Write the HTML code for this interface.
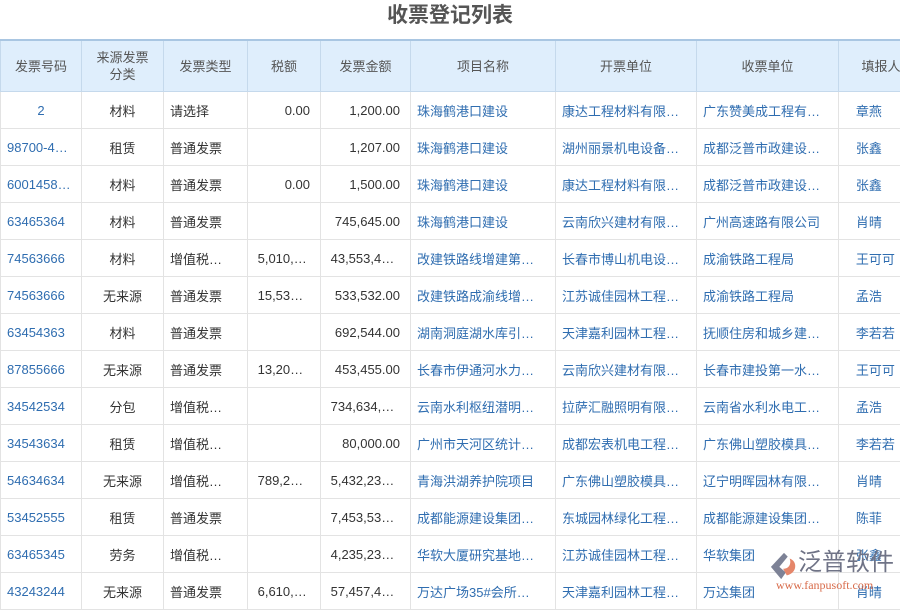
<!DOCTYPE html><html><head><meta charset="utf-8"><style>
body{margin:0;width:900px;height:600px;overflow:hidden;background:#fff;font-family:"Liberation Sans","Noto Sans CJK SC",sans-serif;}
h1{margin:0;position:absolute;top:1px;left:0;width:900px;text-align:center;font-size:21px;line-height:30px;color:#555;font-weight:bold;}
table{position:absolute;top:39px;left:0;border-collapse:collapse;table-layout:fixed;width:923px;font-size:13px;}
th{background:#dfeefc;color:#555;font-weight:normal;height:50px;padding:0;border:1px solid #c5d9ec;border-top:2px solid #a9c6e2;line-height:17px;}
td{height:36px;padding:0 6px;border:1px solid #e3e3e3;white-space:nowrap;overflow:hidden;color:#333;}
td.c{text-align:center}td.r{text-align:right;padding-right:10px}
.b{color:#2f6db0}
.logo{position:absolute;left:770px;top:548px;}
</style></head><body>
<h1>收票登记列表</h1>
<table>
<colgroup><col style="width:81px"><col style="width:82px"><col style="width:84px"><col style="width:73px"><col style="width:90px"><col style="width:145px"><col style="width:141px"><col style="width:142px"><col style="width:85px"></colgroup>
<tr><th>发票号码</th><th>来源发票<br>分类</th><th>发票类型</th><th>税额</th><th>发票金额</th><th>项目名称</th><th>开票单位</th><th>收票单位</th><th>填报人</th></tr>
<tr><td class="c b">2</td><td class="c">材料</td><td>请选择</td><td class="r">0.00</td><td class="r">1,200.00</td><td class="b">珠海鹤港口建设</td><td class="b">康达工程材料有限…</td><td class="b">广东赞美成工程有…</td><td class="b">&nbsp;&nbsp;&nbsp;章燕</td></tr>
<tr><td class="b">98700-4…</td><td class="c">租赁</td><td>普通发票</td><td class="r"></td><td class="r">1,207.00</td><td class="b">珠海鹤港口建设</td><td class="b">湖州丽景机电设备…</td><td class="b">成都泛普市政建设…</td><td class="b">&nbsp;&nbsp;&nbsp;张鑫</td></tr>
<tr><td class="b">6001458…</td><td class="c">材料</td><td>普通发票</td><td class="r">0.00</td><td class="r">1,500.00</td><td class="b">珠海鹤港口建设</td><td class="b">康达工程材料有限…</td><td class="b">成都泛普市政建设…</td><td class="b">&nbsp;&nbsp;&nbsp;张鑫</td></tr>
<tr><td class="b">63465364</td><td class="c">材料</td><td>普通发票</td><td class="r"></td><td class="r">745,645.00</td><td class="b">珠海鹤港口建设</td><td class="b">云南欣兴建材有限…</td><td class="b">广州高速路有限公司</td><td class="b">&nbsp;&nbsp;&nbsp;肖晴</td></tr>
<tr><td class="b">74563666</td><td class="c">材料</td><td>增值税…</td><td>&nbsp;5,010,…</td><td>&nbsp;43,553,4…</td><td class="b">改建铁路线增建第…</td><td class="b">长春市博山机电设…</td><td class="b">成渝铁路工程局</td><td class="b">&nbsp;&nbsp;&nbsp;王可可</td></tr>
<tr><td class="b">74563666</td><td class="c">无来源</td><td>普通发票</td><td>&nbsp;15,53…</td><td class="r">533,532.00</td><td class="b">改建铁路成渝线增…</td><td class="b">江苏诚佳园林工程…</td><td class="b">成渝铁路工程局</td><td class="b">&nbsp;&nbsp;&nbsp;孟浩</td></tr>
<tr><td class="b">63454363</td><td class="c">材料</td><td>普通发票</td><td class="r"></td><td class="r">692,544.00</td><td class="b">湖南洞庭湖水库引…</td><td class="b">天津嘉利园林工程…</td><td class="b">抚顺住房和城乡建…</td><td class="b">&nbsp;&nbsp;&nbsp;李若若</td></tr>
<tr><td class="b">87855666</td><td class="c">无来源</td><td>普通发票</td><td>&nbsp;13,20…</td><td class="r">453,455.00</td><td class="b">长春市伊通河水力…</td><td class="b">云南欣兴建材有限…</td><td class="b">长春市建投第一水…</td><td class="b">&nbsp;&nbsp;&nbsp;王可可</td></tr>
<tr><td class="b">34542534</td><td class="c">分包</td><td>增值税…</td><td class="r"></td><td>&nbsp;734,634,…</td><td class="b">云南水利枢纽潜明…</td><td class="b">拉萨汇融照明有限…</td><td class="b">云南省水利水电工…</td><td class="b">&nbsp;&nbsp;&nbsp;孟浩</td></tr>
<tr><td class="b">34543634</td><td class="c">租赁</td><td>增值税…</td><td class="r"></td><td class="r">80,000.00</td><td class="b">广州市天河区统计…</td><td class="b">成都宏表机电工程…</td><td class="b">广东佛山塑胶模具…</td><td class="b">&nbsp;&nbsp;&nbsp;李若若</td></tr>
<tr><td class="b">54634634</td><td class="c">无来源</td><td>增值税…</td><td>&nbsp;789,2…</td><td>&nbsp;5,432,23…</td><td class="b">青海洪湖养护院项目</td><td class="b">广东佛山塑胶模具…</td><td class="b">辽宁明晖园林有限…</td><td class="b">&nbsp;&nbsp;&nbsp;肖晴</td></tr>
<tr><td class="b">53452555</td><td class="c">租赁</td><td>普通发票</td><td class="r"></td><td>&nbsp;7,453,53…</td><td class="b">成都能源建设集团…</td><td class="b">东城园林绿化工程…</td><td class="b">成都能源建设集团…</td><td class="b">&nbsp;&nbsp;&nbsp;陈菲</td></tr>
<tr><td class="b">63465345</td><td class="c">劳务</td><td>增值税…</td><td class="r"></td><td>&nbsp;4,235,23…</td><td class="b">华软大厦研究基地…</td><td class="b">江苏诚佳园林工程…</td><td class="b">华软集团</td><td class="b">&nbsp;&nbsp;&nbsp;张鑫</td></tr>
<tr><td class="b">43243244</td><td class="c">无来源</td><td>普通发票</td><td>&nbsp;6,610,…</td><td>&nbsp;57,457,4…</td><td class="b">万达广场35#会所…</td><td class="b">天津嘉利园林工程…</td><td class="b">万达集团</td><td class="b">&nbsp;&nbsp;&nbsp;肖晴</td></tr>
</table>
<div class="logo">
<svg width="28" height="28" viewBox="0 0 30 30" style="position:absolute;left:0;top:4px"><path d="M15 1 L1 16 L12 29 L17 22 L10 16 L19 5Z" fill="#7d8296"/><path d="M21 7 C30 10 29 23 18 25 L14 18 C21 18 23 12 21 7Z" fill="#e5866a"/></svg>
<div style="position:absolute;left:28px;top:0;font-size:24px;color:#6f7386;white-space:nowrap;line-height:30px">泛普软件</div>
<div style="position:absolute;left:6px;top:30px;font-size:12px;color:#d86b4a;white-space:nowrap;font-family:'Liberation Serif',serif">www.fanpusoft.com</div>
</div>
</body></html>
